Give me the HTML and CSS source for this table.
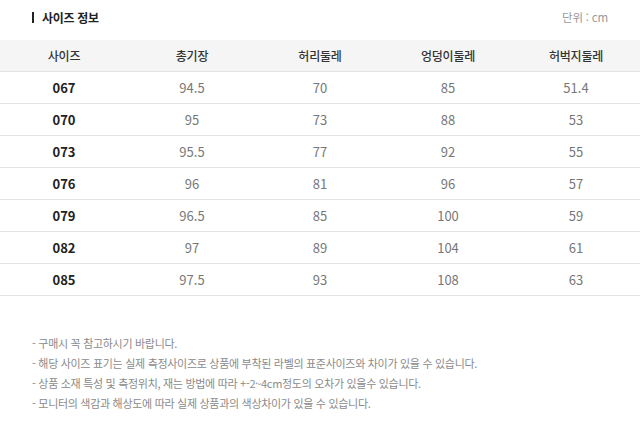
FILE: index.html
```html
<!DOCTYPE html>
<html lang="ko">
<head>
<meta charset="utf-8">
<link rel="stylesheet" href="styles.css">
</head>
<body>
<div class="page">
  <div class="title-row">
    <h2 class="title"><span class="bar"></span>사이즈 정보</h2>
    <span class="unit">단위 : cm</span>
  </div>
  <table class="size-table">
    <thead>
      <tr><th>사이즈</th><th>총기장</th><th>허리둘레</th><th>엉덩이둘레</th><th>허벅지둘레</th></tr>
    </thead>
    <tbody>
      <tr><td class="size">067</td><td>94.5</td><td>70</td><td>85</td><td>51.4</td></tr>
      <tr><td class="size">070</td><td>95</td><td>73</td><td>88</td><td>53</td></tr>
      <tr><td class="size">073</td><td>95.5</td><td>77</td><td>92</td><td>55</td></tr>
      <tr><td class="size">076</td><td>96</td><td>81</td><td>96</td><td>57</td></tr>
      <tr><td class="size">079</td><td>96.5</td><td>85</td><td>100</td><td>59</td></tr>
      <tr><td class="size">082</td><td>97</td><td>89</td><td>104</td><td>61</td></tr>
      <tr><td class="size">085</td><td>97.5</td><td>93</td><td>108</td><td>63</td></tr>
    </tbody>
  </table>
  <ul class="notes">
    <li>- 구매시 꼭 참고하시기 바랍니다.</li>
    <li>- 해당 사이즈 표기는 실제 측정사이즈로 상품에 부착된 라벨의 표준사이즈와 차이가 있을 수 있습니다.</li>
    <li>- 상품 소재 특성 및 측정위치, 재는 방법에 따라 +-2~4cm정도의 오차가 있을수 있습니다.</li>
    <li>- 모니터의 색감과 해상도에 따라 실제 상품과의 색상차이가 있을 수 있습니다.</li>
  </ul>
</div>
</body>
</html>
```

FILE: styles.css
```css
* { box-sizing: border-box; }
html, body {
  margin: 0;
  padding: 0;
  background: #fff;
  font-family: "Noto Sans CJK KR", "Noto Sans", sans-serif;
}
.page {
  width: 640px;
  height: 437px;
  overflow: hidden;
}
.title-row {
  display: flex;
  justify-content: space-between;
  align-items: center;
  height: 34px;
  padding: 0 32px 0 32px;
  margin-bottom: 6px;
}
.title {
  display: flex;
  align-items: center;
  margin: 0;
  font-size: 12px;
  font-weight: 700;
  color: #222;
  letter-spacing: -0.3px;
}
.bar {
  display: inline-block;
  width: 2px;
  height: 11px;
  background: #222;
  margin-right: 8px;
}
.unit {
  font-size: 11.5px;
  color: #999;
  letter-spacing: -0.2px;
}
.size-table {
  width: 640px;
  border-collapse: collapse;
  table-layout: fixed;
}
.size-table th {
  background: #f5f5f5;
  height: 31px;
  font-size: 12px;
  font-weight: 500;
  color: #333;
  letter-spacing: -0.2px;
  border-bottom: 1px solid #e3e3e3;
  padding: 0;
  text-align: center;
}
.size-table td {
  height: 32px;
  font-size: 13px;
  color: #777;
  border-bottom: 1px solid #e3e3e3;
  padding: 0;
  text-align: center;
}
.size-table td.size {
  font-weight: 700;
  color: #222;
}
.notes {
  list-style: none;
  margin: 37px 0 0 0;
  padding: 0 0 0 32px;
  font-size: 11px;
  color: #8a8a8a;
  letter-spacing: -0.3px;
}
.notes li {
  height: 20px;
  line-height: 20px;
}
```
